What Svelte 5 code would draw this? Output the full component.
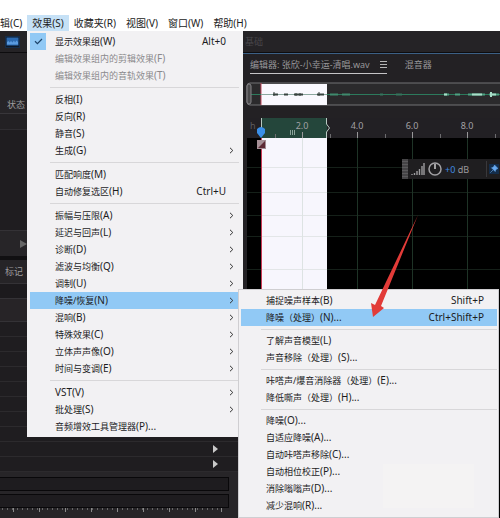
<script lang="ts">
  type Item = {
    name: string;
    key: string;
    shortcut?: string;
    checked?: boolean;
    disabled?: boolean;
    sub?: boolean;
    active?: boolean;
  };

  const menus = [
    { name: "辑", key: "(C)" },
    { name: "效果", key: "(S)", open: true },
    { name: "收藏夹", key: "(R)" },
    { name: "视图", key: "(V)" },
    { name: "窗口", key: "(W)" },
    { name: "帮助", key: "(H)" },
  ];

  const effects: Item[][] = [
    [
      { name: "显示效果组", key: "(W)", shortcut: "Alt+0", checked: true },
      { name: "编辑效果组内的剪辑效果", key: "(F)", disabled: true },
      { name: "编辑效果组内的音轨效果", key: "(T)", disabled: true },
    ],
    [
      { name: "反相", key: "(I)" },
      { name: "反向", key: "(R)" },
      { name: "静音", key: "(S)" },
      { name: "生成", key: "(G)", sub: true },
    ],
    [
      { name: "匹配响度", key: "(M)" },
      { name: "自动修复选区", key: "(H)", shortcut: "Ctrl+U" },
    ],
    [
      { name: "振幅与压限", key: "(A)", sub: true },
      { name: "延迟与回声", key: "(L)", sub: true },
      { name: "诊断", key: "(D)", sub: true },
      { name: "滤波与均衡", key: "(Q)", sub: true },
      { name: "调制", key: "(U)", sub: true },
      { name: "降噪/恢复", key: "(N)", sub: true, active: true },
      { name: "混响", key: "(B)", sub: true },
      { name: "特殊效果", key: "(C)", sub: true },
      { name: "立体声声像", key: "(O)", sub: true },
      { name: "时间与变调", key: "(E)", sub: true },
    ],
    [
      { name: "", key: "VST(V)", sub: true },
      { name: "批处理", key: "(S)", sub: true },
      { name: "音频增效工具管理器", key: "(P)..." },
    ],
  ];

  const restoration: Item[][] = [
    [
      { name: "捕捉噪声样本", key: "(B)", shortcut: "Shift+P" },
      { name: "降噪（处理）", key: "(N)...", shortcut: "Ctrl+Shift+P", active: true },
    ],
    [
      { name: "了解声音模型", key: "(L)" },
      { name: "声音移除（处理）", key: "(S)..." },
    ],
    [
      { name: "咔嗒声/爆音消除器（处理）", key: "(E)..." },
      { name: "降低嘶声（处理）", key: "(H)..." },
    ],
    [
      { name: "降噪", key: "(O)..." },
      { name: "自适应降噪", key: "(A)..." },
      { name: "自动咔嗒声移除", key: "(C)..." },
      { name: "自动相位校正", key: "(P)..." },
      { name: "消除嗡嗡声", key: "(D)..." },
      { name: "减少混响", key: "(R)..." },
    ],
  ];

  const markerRows = Array.from({ length: 8 });
  const ticks = [2, 4, 6, 8];
  const gridRows = [29, 54, 77, 98, 131];

  // x of a time in seconds on the ruler
  const at = (t: number) => Math.round(t * 27.5);
</script>

{#snippet group(items: Item[])}
  <ul class="group" role="group">
    {#each items as it}
      <li role="none">
        <button
          class="item"
          class:active={it.active}
          role={it.checked ? "menuitemcheckbox" : "menuitem"}
          aria-checked={it.checked ? "true" : undefined}
          aria-haspopup={it.sub ? "menu" : undefined}
          disabled={it.disabled}
        >
          <span class="check" class:on={it.checked}>
            {#if it.checked}
              <svg width="9" height="7" viewBox="0 0 9 7"><path d="M1 3.3 3.4 5.6 8 1" fill="none" stroke="#1d4469" stroke-width="1.2" /></svg>
            {/if}
          </span>
          <span class="label">{it.name}<span class="key">{it.key}</span></span>
          {#if it.shortcut}<span class="shortcut">{it.shortcut}</span>{/if}
          {#if it.sub}
            <svg class="chevron" width="5" height="7" viewBox="0 0 5 7"><path d="M1 .8 3.8 3.5 1 6.2" fill="none" stroke="#333" /></svg>
          {/if}
        </button>
      </li>
    {/each}
  </ul>
{/snippet}

<div class="app">
  <nav class="menubar">
    {#each menus as m}
      <button class:open={m.open} aria-haspopup="menu">{m.name}{m.key}</button>
    {/each}
  </nav>

  <div class="workspace">
    <section class="left">
      <div class="tools">
        <svg width="15" height="12" viewBox="0 0 15 12">
          <rect x=".5" y=".5" width="14" height="11" fill="#0c1828" stroke="#152c48" />
          <rect x="1.5" y="1.5" width="12" height="8" fill="#2b69b0" />
          <path d="M2 8.5V6l1.5-1 1 1.5L6 5l1.5 1.5L9 4.5l1 2 1.5-2L13 6v2.5z" fill="#5a9be0" />
        </svg>
      </div>
      <div class="files"><span>状态</span></div>
      <div class="filehead"></div>
      <div class="filelist"></div>
      <div class="transport">
        <svg width="7" height="8" viewBox="0 0 7 8"><path d="M0 0 7 4 0 8z" fill="#666" /></svg>
      </div>
      <div class="tab">标记</div>
      <div class="bar"></div>
      <div class="bar tall"></div>
      {#each markerRows as _}
        <div class="row"></div>
      {/each}
      {#each [1, 2] as _}
        <div class="row arrow">
          <svg width="5" height="8" viewBox="0 0 5 8"><path d="M0 0 5 4 0 8z" fill="#c9c9c9" /></svg>
        </div>
      {/each}
      <div class="levels">
        <div class="meter"></div>
        <div class="meter"></div>
        <svg class="scale" width="100%" height="4">
          <defs>
            <pattern id="minor" width="5" height="4" patternUnits="userSpaceOnUse"><rect x="2" width="1" height="2" fill="#666" /></pattern>
            <pattern id="major" width="26" height="4" patternUnits="userSpaceOnUse"><rect x="13" width="1" height="4" fill="#8a8a8a" /></pattern>
          </defs>
          <rect width="222" height="4" fill="url(#minor)" />
          <rect width="222" height="4" fill="url(#major)" />
        </svg>
      </div>
    </section>

    <section class="right">
      <div class="tools dim">基础</div>
      <div class="tabs">
        <a href="#editor" class="current">
          编辑器: 张欣-小幸运-清唱.wav
          <svg width="7" height="7" viewBox="0 0 7 7"><path d="M0 .5h7M0 3.5h7M0 6.5h7" stroke="#b5b5b5" /></svg>
        </a>
        <a href="#mixer">混音器</a>
      </div>

      <svg class="overview" width="100%" height="24">
        <rect x="1" y="1" width="800" height="22" rx="3" fill="#2b2a2c" stroke="#737275" />
        <rect x="15" y="2" width="66" height="21" fill="#f9f8fe" />
        <path d="M15 1v22" stroke="#c0485c" />
        <path d="M4 12.5h11M81 12.5h180" stroke="#2c7a5c" />
        <path d="M15 12.5h66" stroke="#8ba79f" />
        <path d="M27 12.5h5M38 12.5h4M48 12.5h9M71 12.5h7" stroke="#37423f" stroke-width="2" />
        <path d="M28 10v4M50 11v3M54 11v3M73 10v4" stroke="#37423f" />
        <path d="M84 12.5h8M96 12.5h8" stroke="#3f8a6d" stroke-width="2" />
        <path d="M134 12.5h3M150 12.5h6" stroke="#35745c" stroke-width="2" />
        <path d="M198 12.5h5M209 12.5h5M222 12.5h17M243 12.5h10" stroke="#4da282" stroke-width="2" />
        <path d="M198 12.5h3M226 12.5h10M244 12.5h6M245 10v5" stroke="#a8ddc8" stroke-width="2" />
        <rect x="1" y="2" width="4" height="20" rx="2" fill="#4a494b" stroke="#858487" />
      </svg>

      <div class="wave">
        <svg class="ruler" width="100%" height="20">
          <rect x="14" width="66" height="20" fill="#24463b" />
          <text x="3" y="11" class="unit">h</text>
          {#each ticks as t}
            <text x={at(t)} y="11" text-anchor="middle">{t}.0</text>
            <path d="M{at(t)}.5 14v6" stroke="#99989a" />
            <path d="M{at(t) - 27}.5 16v4" stroke="#6d6c6f" />
          {/each}
          <path d="M248.5 16v4" stroke="#6d6c6f" />
          <path d="M43.5 12v5M45.5 12v5M47.5 12v5" stroke="#8aa399" />
          <path d="M14.5 0v10M79.5 0v6l3 4-3 4v6" fill="none" stroke="#b9c9c2" />
          <path d="M10 11q4-4 8 0v4l-4 5-4-5z" fill="#3a8fe8" />
        </svg>
        <svg class="canvas" width="100%" height="100%">
          <rect x="14" width="66" height="100%" fill="#f7f6fd" />
          {#each gridRows as y}
            <path d="M0 {y}.5h14M80 {y}.5h800" stroke="#152019" />
            <path d="M14 {y}.5h66" stroke="#e3e6e8" />
          {/each}
          {#each ticks as t}
            <path d="M{at(t)}.5 0v400" stroke={t === 2 ? "#dde3e3" : "#1e3326"} />
          {/each}
          <path d="M14.5 0v400" stroke="#c93a55" />
          <rect x="10" y="2" width="9" height="9" fill="#a58f96" />
          <path d="M11 10 18 3v7z" fill="#5d2a35" />
        </svg>
        <div class="hud">
          <i class="grip"></i>
          <svg width="14" height="12" viewBox="0 0 14 12"><path d="M1 12v-1M3.5 12v-2M6 12V8M8.5 12V6M11 12V3M13 12V0" stroke="#9d9c9f" stroke-width="1.4" /></svg>
          <svg width="14" height="14" viewBox="0 0 14 14"><circle cx="7" cy="7" r="6" fill="none" stroke="#a2a1a4" stroke-width="1.5" /><path d="M7 2v5" stroke="#d0d0d0" stroke-width="1.5" /></svg>
          <span class="gain"><b>+0</b> dB</span>
          <span class="pinbox">
            <button class="pin" aria-label="固定">
              <svg width="8" height="8" viewBox="0 0 8 8"><path d="M4.5 0 8 3.5 6.8 3.8 5.5 5.3 5.2 6.5 1.5 2.8 2.7 2.5 4.2 1.2zM3 5 .3 7.7" fill="#68aaf0" stroke="#68aaf0" stroke-width=".6" /></svg>
            </button>
          </span>
        </div>
      </div>
    </section>
  </div>

  <div class="menu effects" role="menu" aria-label="效果">
    {#each effects as g}{@render group(g)}{/each}
  </div>
  <div class="menu restoration" role="menu" aria-label="降噪/恢复">
    {#each restoration as g}{@render group(g)}{/each}
    <i class="patch"></i>
  </div>

  <svg class="pointer" width="50" height="104" viewBox="0 0 50 104">
    <path d="M48 1 11 92 14 94 3 103 1 89 5 91z" fill="#e23b38" />
  </svg>
</div>

<style>
  :global(body) {
    margin: 0;
    background: #1e1d1f;
  }
  .app {
    position: relative;
    display: flex;
    flex-direction: column;
    min-height: 100vh;
    overflow: hidden;
    font-family: "Noto Sans", "Noto Sans CJK SC", sans-serif;
    font-size: 9px;
    color: #9c9b9e;
  }
  button {
    font: inherit;
    color: inherit;
    border: 0;
    padding: 0;
    background: none;
  }
  svg {
    display: block;
    flex: none;
  }

  .menubar {
    display: flex;
    padding-top: 15px;
    background: #fff;
    font-size: 10px;
    color: #222;
  }
  .menubar button {
    height: 16px;
    padding: 0 5px;
    line-height: 16px;
    white-space: nowrap;
  }
  .menubar button:first-child {
    padding-left: 0;
  }
  .menubar .open {
    background: #c6e1f6;
  }

  .workspace {
    flex: 1;
    display: grid;
    grid-template-columns: 238px 1fr;
    background: #1e1d1f;
  }

  /* left column */
  .left {
    display: flex;
    flex-direction: column;
    background: #1f1d20;
  }
  .tools {
    display: flex;
    align-items: center;
    box-sizing: border-box;
    height: 22px;
    padding-left: 5px;
    background: #252326;
    border-bottom: 1px solid #0d0c0e;
  }
  .files {
    display: flex;
    align-items: flex-end;
    height: 60px;
    padding: 0 7px;
    line-height: 16px;
    background: #262427;
    border-bottom: 1px solid #38363a;
  }
  .filehead {
    height: 15px;
    background: #232124;
    border-bottom: 1px solid #2f2d31;
  }
  .filelist {
    height: 100px;
  }
  .transport {
    display: flex;
    align-items: center;
    height: 25px;
    padding-left: 20px;
    background: #272528;
    border-top: 1px solid #343236;
    border-bottom: 4px solid #111012;
  }
  .tab {
    height: 23px;
    padding-left: 5px;
    line-height: 23px;
    background: #262427;
    border-bottom: 1px solid #343236;
  }
  .bar {
    height: 14px;
    background: #1c1a1d;
    border-bottom: 1px solid #343236;
  }
  .bar.tall {
    height: 22px;
    background: #272427;
  }
  .row {
    box-sizing: border-box;
    height: 15px;
    border-bottom: 1px solid #2c2a2d;
  }
  .arrow {
    display: flex;
    align-items: center;
    justify-content: flex-end;
    padding-right: 20px;
  }
  .levels {
    flex: 1;
    display: flex;
    flex-direction: column;
    gap: 3px;
    padding: 5px 9px 0 0;
    background: #272528;
  }
  .meter {
    height: 12px;
    background: #1e1c1f;
    border: 1px solid #09080a;
    border-left: 0;
  }
  .scale {
    margin-top: -3px;
  }

  /* editor */
  .right {
    display: flex;
    flex-direction: column;
    min-width: 0;
    margin-left: 5px;
    background: #232124;
  }
  .dim {
    padding-left: 2px;
    color: #48464a;
  }
  .tabs {
    display: flex;
    align-items: flex-start;
    gap: 18px;
    padding: 2px 7px 0;
    border-top: 1px solid #3c6085;
  }
  .tabs a {
    display: flex;
    align-items: center;
    gap: 10px;
    height: 17px;
    color: #98979a;
    text-decoration: none;
    white-space: nowrap;
    border-bottom: 1px solid transparent;
  }
  .tabs .current {
    border-color: #c5c4c7;
  }
  .overview {
    margin: 8px 0 0 3px;
  }
  .wave {
    position: relative;
    flex: 1;
    display: flex;
    flex-direction: column;
    margin: 12px 0 0 4px;
    background: #000;
  }
  .ruler {
    background: #222024;
  }
  .ruler text {
    font-size: 9px;
    fill: #a2a1a4;
  }
  .ruler .unit {
    fill: #5d5b5f;
  }
  .canvas {
    flex: 1;
  }
  .hud {
    position: absolute;
    top: 41px;
    left: 155px;
    display: flex;
    align-items: center;
    gap: 3px;
    width: 98px;
    height: 20px;
    background: #1f1e20;
  }
  .grip {
    width: 6px;
    height: 20px;
    background: repeating-linear-gradient(#454446 0 2px, #5b5a5c 2px 3px);
  }
  .gain {
    flex: 1;
    white-space: nowrap;
  }
  .gain b {
    font-weight: 400;
    color: #3f8be0;
  }
  .pinbox {
    display: flex;
    align-items: center;
    height: 16px;
    padding: 0 1px 0 2px;
    border-left: 1px solid #39383b;
  }
  .pin {
    padding: 1px;
    background: #142d4a;
  }

  /* drop-down menus */
  .menu {
    position: absolute;
    box-sizing: border-box;
    background: #f2f1f3;
    color: #1c1c1e;
  }
  .effects {
    top: 31px;
    left: 27px;
    width: 216px;
    padding: 2px 4px 2px 3px;
  }
  .restoration {
    top: 289px;
    left: 238px;
    width: 261px;
    padding: 2px 1px 3px 2px;
    border: 1px solid #cfced1;
  }
  .group {
    margin: 0;
    padding: 0;
    list-style: none;
  }
  .group + .group::before {
    content: "";
    display: block;
    height: 1px;
    margin: 3px 0 3px 20px;
    background: #d8d7d9;
  }
  .restoration .group + .group::before {
    margin-bottom: 2px;
  }
  .item {
    display: flex;
    align-items: center;
    width: 100%;
    height: 17px;
    line-height: 17px;
    text-align: left;
    white-space: nowrap;
  }
  .item:disabled {
    color: #8b8a8d;
  }
  .item.active {
    background: #91c9f5;
  }
  .check {
    display: flex;
    align-items: center;
    justify-content: center;
    width: 16px;
    height: 17px;
    margin-right: 9px;
  }
  .check.on {
    background: #91c9f5;
  }
  .label {
    flex: 1;
  }
  .key,
  .shortcut {
    font-size: 10px;
  }
  .shortcut {
    padding-right: 13px;
  }
  .chevron {
    margin-right: 5px;
  }
  .patch {
    position: absolute;
    right: 24px;
    bottom: 9px;
    width: 91px;
    height: 44px;
    background: #f4f3f3;
  }
  .pointer {
    position: absolute;
    top: 214px;
    left: 370px;
  }
</style>
